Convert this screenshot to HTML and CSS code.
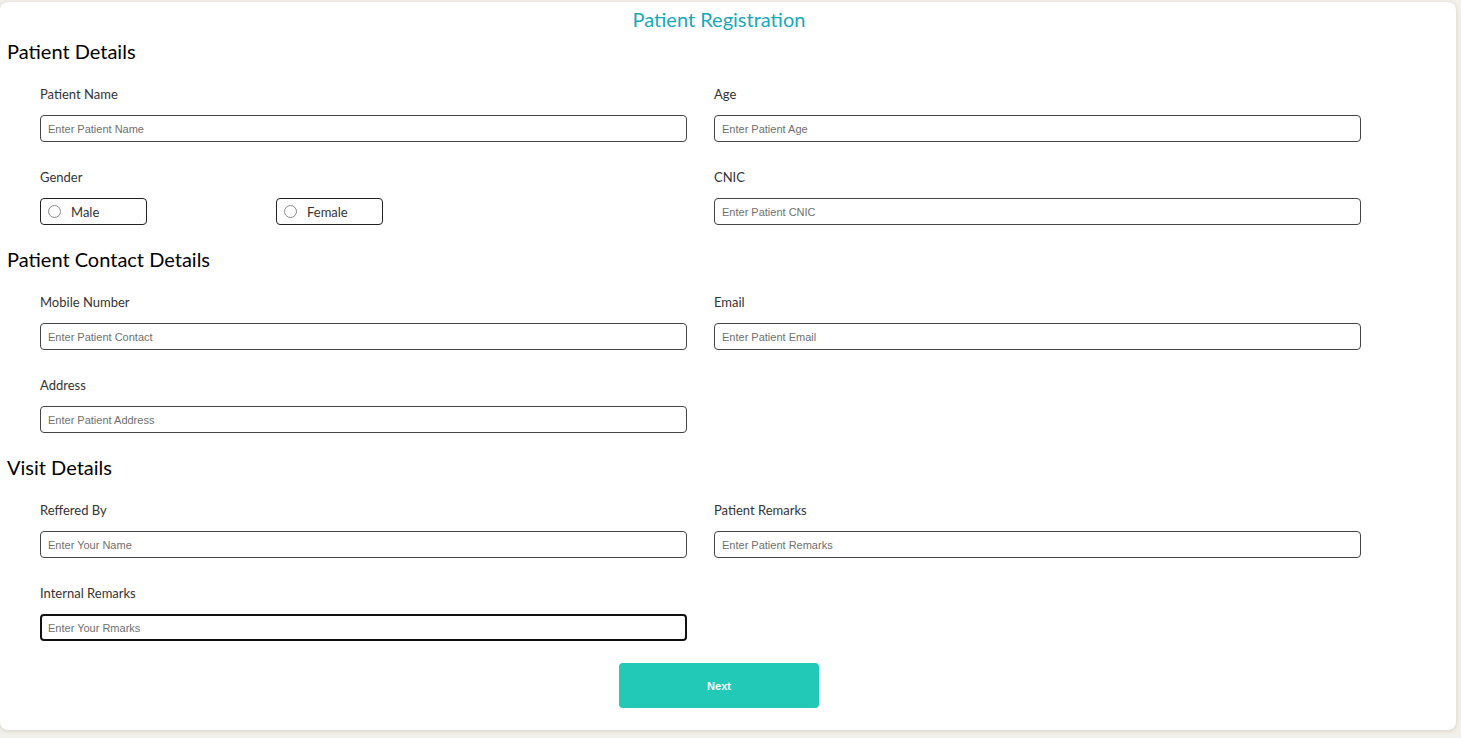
FILE: index.html
```html
<!DOCTYPE html>
<html lang="en">
<head>
<meta charset="utf-8">
<title>Patient Registration</title>
<link rel="stylesheet" href="styles.css">
</head>
<body>
<div class="card">
  <h1 class="title">Patient Registration</h1>

  <h2 class="section">Patient Details</h2>
  <div class="grid">
    <div class="field">
      <label class="label">Patient Name</label>
      <input class="input" type="text" placeholder="Enter Patient Name">
    </div>
    <div class="field">
      <label class="label">Age</label>
      <input class="input" type="text" placeholder="Enter Patient Age">
    </div>
    <div class="field">
      <label class="label">Gender</label>
      <div class="radios">
        <label class="radio-box"><span class="radio"></span><span>Male</span></label>
        <label class="radio-box"><span class="radio"></span><span>Female</span></label>
      </div>
    </div>
    <div class="field">
      <label class="label">CNIC</label>
      <input class="input" type="text" placeholder="Enter Patient CNIC">
    </div>
  </div>

  <h2 class="section">Patient Contact Details</h2>
  <div class="grid">
    <div class="field">
      <label class="label">Mobile Number</label>
      <input class="input" type="text" placeholder="Enter Patient Contact">
    </div>
    <div class="field">
      <label class="label">Email</label>
      <input class="input" type="text" placeholder="Enter Patient Email">
    </div>
    <div class="field">
      <label class="label">Address</label>
      <input class="input" type="text" placeholder="Enter Patient Address">
    </div>
  </div>

  <h2 class="section">Visit Details</h2>
  <div class="grid">
    <div class="field">
      <label class="label">Reffered By</label>
      <input class="input" type="text" placeholder="Enter Your Name">
    </div>
    <div class="field">
      <label class="label">Patient Remarks</label>
      <input class="input" type="text" placeholder="Enter Patient Remarks">
    </div>
    <div class="field">
      <label class="label">Internal Remarks</label>
      <input class="input input-focus" type="text" placeholder="Enter Your Rmarks">
    </div>
  </div>

  <div class="actions">
    <button class="btn" type="button">Next</button>
  </div>
</div>
</body>
</html>
```

FILE: styles.css
```css
* { box-sizing: border-box; }

html, body {
  margin: 0;
  padding: 0;
  background: #f2f0eb;
}

body {
  font-family: "Lato", "Liberation Sans", sans-serif;
  color: #111;
  padding: 2px 5px 8px 0;
}

.card {
  background: #fff;
  border-radius: 8px;
  box-shadow: 0 1px 4px rgba(160, 150, 130, 0.35);
  padding: 5px 25px 22px 7px;
  height: 728px;
}

.title {
  margin: 0;
  text-align: center;
  font-size: 20px;
  line-height: 24px;
  font-weight: 400;
  color: #17a9b9;
}

.section {
  margin: 8px 0 23px 0;
  font-size: 20px;
  line-height: 24px;
  font-weight: 400;
  color: #000;
}

.grid + .section { margin-top: 22px; }

.grid {
  margin-left: 33px;
  width: 1321px;
  display: grid;
  grid-template-columns: 647px 647px;
  column-gap: 27px;
  row-gap: 27px;
}

.field {
  display: flex;
  flex-direction: column;
}

.label {
  font-size: 13px;
  line-height: 16px;
  color: #333;
  margin-bottom: 13px;
}

.input {
  height: 27px;
  border: 1px solid #444;
  border-radius: 4px;
  padding: 0 7px;
  font-family: "Liberation Sans", Arial, sans-serif;
  font-size: 11px;
  color: #333;
  background: #fff;
  outline: none;
}

.input::placeholder { color: #6f6f6f; }

.input-focus {
  border: 2px solid #111;
  padding: 0 6px;
}

.radios {
  display: flex;
  gap: 129px;
}

.radio-box {
  width: 107px;
  height: 27px;
  border: 1px solid #222;
  border-radius: 4px;
  display: flex;
  align-items: center;
  padding-left: 7px;
  font-size: 13px;
  color: #333;
}

.radio {
  width: 13px;
  height: 13px;
  border: 1px solid #8a8a8a;
  border-radius: 50%;
  margin-right: 10px;
  flex: none;
}

.actions {
  display: flex;
  justify-content: center;
  margin-top: 22px;
}

.btn {
  width: 200px;
  height: 45px;
  border: none;
  border-radius: 4px;
  background: #22c9b6;
  color: #fff;
  font-family: "Liberation Sans", Arial, sans-serif;
  font-weight: 700;
  font-size: 11px;
}
```
